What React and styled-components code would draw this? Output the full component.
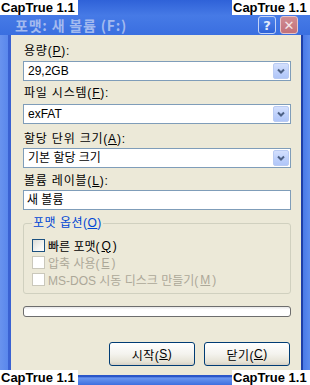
import styled, { createGlobalStyle } from 'styled-components';

const GlobalStyle = createGlobalStyle`
  html, body {
    margin: 0;
    padding: 0;
  }
  body {
    width: 310px;
    height: 385px;
    overflow: hidden;
    background: #3a6ee0;
    font-family: "Liberation Sans", "Noto Sans CJK KR", sans-serif;
    font-size: 12px;
    color: #000;
  }
`;

const Screen = styled.div`
  position: relative;
  width: 310px;
  height: 385px;
  display: flex;
  flex-direction: column;
  overflow: hidden;
`;

const TitleBar = styled.div`
  height: 35px;
  flex: none;
  box-sizing: border-box;
  padding: 16px 12px 0 15px;
  display: flex;
  align-items: flex-start;
  background: linear-gradient(180deg, #2f62d8 0%, #467ae6 45%, #3a6fe0 100%);
`;

const Title = styled.div`
  flex: 1;
  margin-top: 2px;
  line-height: 14px;
  font-size: 14px;
  font-weight: bold;
  letter-spacing: 0.8px;
  color: #a3baef;
  font-family: "Noto Sans CJK KR", sans-serif;
`;

const Caption = styled.div`
  display: flex;
  gap: 4px;
`;

const CapButton = styled.div`
  width: 18px;
  height: 18px;
  box-sizing: border-box;
  border: 1px solid ${p => (p.$close ? '#e6c4c8' : '#c3d3f6')};
  border-radius: 3px;
  background: ${p =>
    p.$close
      ? 'linear-gradient(180deg, #d08d93 0%, #c27079 100%)'
      : 'linear-gradient(180deg, #4f85ec 0%, #2f63d8 100%)'};
  color: ${p => (p.$close ? '#f4e6e8' : '#e4ecfb')};
  display: flex;
  align-items: center;
  justify-content: center;
  font-family: "DejaVu Sans", sans-serif;
  font-weight: bold;
  font-size: 13px;
  line-height: 1;
`;

const Window = styled.div`
  flex: 1;
  display: flex;
  min-height: 0;
`;

const LeftFrame = styled.div`
  width: 11px;
  flex: none;
  background: linear-gradient(90deg, #6893ee 0%, #5a88ec 70%, #3a62d2 75%, #3a62d2 100%);
`;

const RightFrame = styled.div`
  width: 9px;
  flex: none;
  background: linear-gradient(90deg, #1f3fa8 0%, #1f3fa8 20%, #4a7ae8 25%, #5e8cee 100%);
`;

const Body = styled.div`
  flex: 1;
  background: #ece9d8;
  box-sizing: border-box;
  padding: 9px 10px 0 12px;
  display: flex;
  flex-direction: column;
`;

const BottomFrame = styled.div`
  height: 10px;
  flex: none;
  background: linear-gradient(180deg, #2a56c8 0%, #2a56c8 15%, #6b96ee 30%, #3d6fe0 100%);
`;

const Label = styled.div`
  margin-top: ${p => p.$top}px;
  padding-left: 1px;
  line-height: 14px;
  height: 14px;
  letter-spacing: 0.8px;
  white-space: nowrap;
`;

const Combo = styled.div`
  margin-top: ${p => p.$top}px;
  height: 20px;
  box-sizing: border-box;
  border: 1px solid #7f9db9;
  background: #fff;
  display: flex;
  align-items: center;
  padding: 1px;
`;

const ComboText = styled.div`
  flex: 1;
  padding-left: 3px;
  line-height: 16px;
`;

const DropButton = styled.div`
  width: 16px;
  height: 16px;
  box-sizing: border-box;
  border: 1px solid #b9cbf3;
  border-radius: 2px;
  background: linear-gradient(180deg, #d4e0fd 0%, #bccffb 60%, #b0c6f8 100%);
  display: flex;
  align-items: center;
  justify-content: center;
`;

const TextBox = styled.div`
  margin-top: ${p => p.$top}px;
  height: 20px;
  box-sizing: border-box;
  border: 1px solid #7f9db9;
  background: #fff;
  padding: 1px 0 0 3px;
  line-height: 16px;
`;

const Group = styled.fieldset`
  margin: 6px 0 0 0;
  padding: 7px 0 5px 8px;
  border: 1px solid #d0d0bf;
  border-radius: 3px;
  min-width: 0;
`;

const Legend = styled.legend`
  color: #0046d5;
  padding: 0 1px;
  margin-left: 0;
  line-height: 14px;
  letter-spacing: 0.5px;
`;

const CheckRow = styled.div`
  height: 17px;
  display: flex;
  align-items: center;
  gap: 2px;
  color: ${p => (p.$disabled ? '#aca899' : '#000')};
  white-space: nowrap;
`;

const Box = styled.div`
  width: 13px;
  height: 13px;
  box-sizing: border-box;
  border: 1px solid ${p => (p.$disabled ? '#cac8bb' : '#1c5180')};
  background: ${p =>
    p.$disabled ? '#fff' : 'linear-gradient(135deg, #dcdcd7 0%, #f4f4f2 60%, #fff 100%)'};
  margin-right: 1px;
`;

const Progress = styled.div`
  margin-top: 12px;
  height: 11px;
  box-sizing: border-box;
  border: 1px solid #6d6d6d;
  border-radius: 3px;
  background: linear-gradient(180deg, #e8e8e8 0%, #fff 30%, #fff 100%);
`;

const ButtonRow = styled.div`
  margin-top: 25px;
  margin-right: 1px;
  display: flex;
  justify-content: flex-end;
  gap: 9px;
`;

const Button = styled.div`
  width: 86px;
  height: 24px;
  box-sizing: border-box;
  border: 1px solid #003c74;
  border-radius: 3px;
  background: linear-gradient(180deg, #ffffff 0%, #f4f3ee 50%, #e6e3d6 85%, #d6d0c5 100%);
  display: flex;
  align-items: center;
  justify-content: center;
  letter-spacing: 0.5px;
`;

const Watermark = styled.div`
  position: absolute;
  ${p => (p.$bottom ? 'bottom: 0;' : 'top: 0;')}
  ${p => (p.$right ? 'right: 0;' : 'left: 0;')}
  width: 78px;
  height: 15px;
  background: #fff;
  color: #000;
  font-family: "Liberation Sans", sans-serif;
  font-weight: bold;
  font-size: 13px;
  line-height: 15px;
  padding-left: 1px;
  box-sizing: border-box;
  white-space: nowrap;
`;

function Chevron() {
  return (
    <svg width="8" height="6" viewBox="0 0 8 6">
      <path d="M1 1.5 L4 4.5 L7 1.5" fill="none" stroke="#4d6185" strokeWidth="2" />
    </svg>
  );
}

function Dropdown({ top, value }) {
  return (
    <Combo $top={top}>
      <ComboText>{value}</ComboText>
      <DropButton>
        <Chevron />
      </DropButton>
    </Combo>
  );
}

export default function App() {
  return (
    <Screen>
      <GlobalStyle />
      <TitleBar>
        <Title>포맷: 새 볼륨 (F:)</Title>
        <Caption>
          <CapButton>?</CapButton>
          <CapButton $close>✕</CapButton>
        </Caption>
      </TitleBar>
      <Window>
        <LeftFrame />
        <Body>
          <Label $top={0}>용량(<u>P</u>):</Label>
          <Dropdown top={3} value="29,2GB" />
          <Label $top={5}>파일 시스템(<u>F</u>):</Label>
          <Dropdown top={4} value="exFAT" />
          <Label $top={8}>할당 단위 크기(<u>A</u>):</Label>
          <Dropdown top={2} value="기본 할당 크기" />
          <Label $top={6}>볼륨 레이블(<u>L</u>):</Label>
          <TextBox $top={2}>새 볼륨</TextBox>
          <Group>
            <Legend>포맷 옵션(<u>O</u>)</Legend>
            <CheckRow>
              <Box />
              빠른 포맷(<u>Q</u>)
            </CheckRow>
            <CheckRow $disabled>
              <Box $disabled />
              압축 사용(<u>E</u>)
            </CheckRow>
            <CheckRow $disabled>
              <Box $disabled />
              MS-DOS 시동 디스크 만들기(<u>M</u>)
            </CheckRow>
          </Group>
          <Progress />
          <ButtonRow>
            <Button>시작(<u>S</u>)</Button>
            <Button>닫기(<u>C</u>)</Button>
          </ButtonRow>
        </Body>
        <RightFrame />
      </Window>
      <BottomFrame />
      <Watermark>CapTrue 1.1</Watermark>
      <Watermark $right>CapTrue 1.1</Watermark>
      <Watermark $bottom>CapTrue 1.1</Watermark>
      <Watermark $bottom $right>CapTrue 1.1</Watermark>
    </Screen>
  );
}
